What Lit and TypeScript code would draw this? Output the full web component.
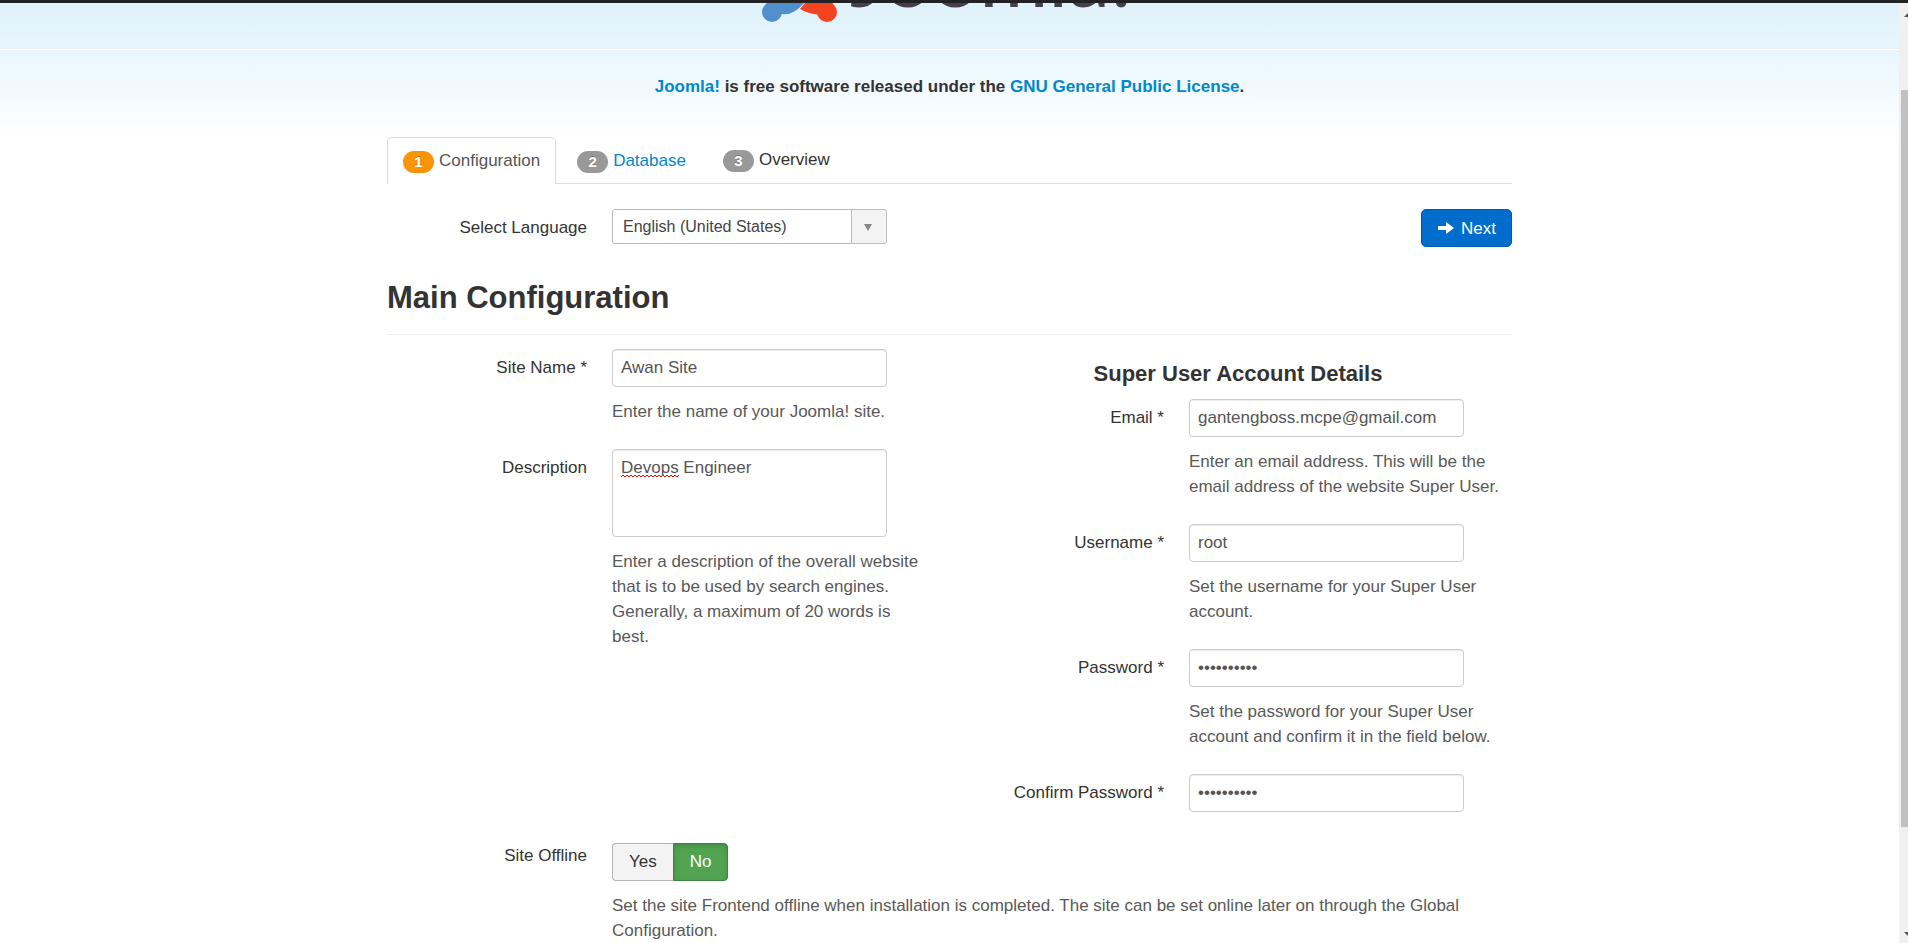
import { LitElement, html, css } from "lit";
import { customElement, property, state } from "lit/decorators.js";

@customElement("control-group")
class ControlGroup extends LitElement {
  @property() label = "";
  @property() kind = "text";
  @property() value = "";
  @property() hint = "";
  @property({ type: Boolean }) required = false;
  @state() offline = false;

  static styles = css`
    :host { display: block; }
    .group { display: grid; grid-template-columns: 200px minmax(0, 1fr); column-gap: 25px; align-items: start; }
    .label { text-align: right; padding-top: 6px; color: #333; }
    .field {
      display: block; box-sizing: border-box; width: 275px; max-width: 100%; height: 38px; margin: 0;
      padding: 5px 8px; border: 1px solid #ccc; border-radius: 4px; background: #fff;
      box-shadow: inset 0 1px 1px rgba(0, 0, 0, 0.075);
      font: inherit; color: #555; outline: none;
    }
    .area-wrap { position: relative; }
    .area { height: 88px; resize: none; overflow: hidden; }
    .squiggle { position: absolute; left: 9px; top: 25px; display: block; }
    .hint { margin: 12px 0 0; color: #595959; }
    .toggle { display: inline-flex; border: 0; margin: 6px 0 0; padding: 0; vertical-align: top; }
    .choice {
      box-sizing: border-box; height: 38px; padding: 5px 16px 7px; font: inherit; cursor: pointer;
      background: #f3f3f3; color: #333; border: 1px solid #b3b3b3;
    }
    .choice:first-child { border-radius: 4px 0 0 4px; border-right: 0; }
    .choice:last-child { border-radius: 0 4px 4px 0; }
    .choice.on {
      background: #51a351; color: #fff; border: 1px solid #3f8340;
      box-shadow: inset 0 2px 4px rgba(0, 0, 0, 0.15);
    }
  `;

  private control() {
    if (this.kind === "toggle") {
      return html`<div class="toggle" role="group" aria-labelledby="lbl">
        <button type="button" class="choice ${this.offline ? "on" : ""}" @click=${() => (this.offline = true)}>Yes</button>
        <button type="button" class="choice ${this.offline ? "" : "on"}" @click=${() => (this.offline = false)}>No</button>
      </div>`;
    }
    if (this.kind === "area") {
      return html`<div class="area-wrap">
        <textarea class="field area" id="ctl" .value=${this.value}></textarea>
        <svg class="squiggle" width="58" height="4" viewBox="0 0 58 4" aria-hidden="true">
          <path d="M0 3l2-2 2 2 2-2 2 2 2-2 2 2 2-2 2 2 2-2 2 2 2-2 2 2 2-2 2 2 2-2 2 2 2-2 2 2 2-2 2 2 2-2 2 2 2-2 2 2 2-2 2 2 2-2 2 2 2-2" fill="none" stroke="#f00" />
        </svg>
      </div>`;
    }
    return html`<input class="field" id="ctl" type=${this.kind} .value=${this.value} />`;
  }

  render() {
    const text = this.label + (this.required ? " *" : "");
    return html`<div class="group">
      ${this.kind === "toggle"
        ? html`<span class="label" id="lbl">${text}</span>`
        : html`<label class="label" for="ctl">${text}</label>`}
      <div>
        ${this.control()}
        ${this.hint ? html`<p class="hint">${this.hint}</p>` : ""}
      </div>
    </div>`;
  }
}

@customElement("app-root")
class AppRoot extends LitElement {
  static styles = css`
    :host {
      display: flex; height: 100vh; overflow: hidden; background: #fff; color: #333;
      font: 17px/25px "Liberation Sans", Arial, sans-serif;
    }
    a { color: #08c; text-decoration: none; }
    .page {
      flex: 1; min-width: 0; overflow: hidden; border-top: 3px solid #222;
      background: linear-gradient(#dff1fb, #eef8ff 70px, #fff 134px);
    }
    .header {
      height: 45px; overflow: hidden; display: flex; justify-content: center;
      border-bottom: 1px solid #eee; box-shadow: 0 1px #fff;
    }
    .logo { display: block; width: 375px; height: 45px; }
    .wordmark { font: 400 84px "Lato", sans-serif; fill: #443f49; }
    .container { box-sizing: border-box; width: 1125px; max-width: 100%; margin: 0 auto; }
    .license { margin: 25px 0 38px; text-align: center; font-weight: bold; font-size: 17px; line-height: 25px; }
    .tabs { display: flex; gap: 5px; margin: 0 0 25px; padding: 0; list-style: none; border-bottom: 1px solid #ddd; }
    .tab { display: flex; gap: 5px; padding: 10px 15px; border: 1px solid transparent; border-bottom: 0; }
    .tab.active { color: #555; background: #fff; border-color: #ddd; border-radius: 5px 5px 0 0; margin-bottom: -1px; padding-bottom: 11px; }
    .tab.plain { border-top: 0; }
    .badge {
      align-self: center; box-sizing: border-box; width: 31px; height: 22px; border-radius: 11px;
      background: #999; color: #fff; font-size: 15px; line-height: 21px; font-weight: bold; text-align: center;
      text-shadow: 0 -1px 0 rgba(0, 0, 0, 0.25); margin-top: 2px;
    }
    .badge.current { background: #f89406; }
    .toolbar { display: grid; grid-template-columns: 200px 1fr auto; column-gap: 25px; align-items: start; }
    .toolbar-label { text-align: right; padding-top: 6px; }
    .select {
      appearance: none; box-sizing: border-box; width: 275px; height: 35px; padding: 0 45px 0 10px;
      font: 16px "Liberation Sans", Arial, sans-serif; color: #444; border: 1px solid #bbb; border-radius: 3px;
      background:
        url("data:image/svg+xml,%3Csvg xmlns='http://www.w3.org/2000/svg' width='35' height='33'%3E%3Cpath d='M0 0h35v33H0z' fill='%23f3f3f3'/%3E%3Cpath d='M0 0h1v33H0z' fill='%23bbb'/%3E%3Cpath d='M13 14h8l-4 7z' fill='%23888'/%3E%3C/svg%3E") right top no-repeat, #fff;
    }
    .next {
      display: flex; align-items: center; gap: 7px; box-sizing: border-box; height: 38px; padding: 0 15px 0 16px;
      font: inherit; color: #fff; background: #006dcc; border: 1px solid #0059a8; border-radius: 5px; cursor: pointer;
    }
    .title { margin: 26px 0 0; padding-bottom: 11px; font-size: 31px; line-height: 50px; font-weight: bold; border-bottom: 1px solid #eee; }
    .columns { display: grid; grid-template-columns: 540px minmax(0, 1fr); column-gap: 37px; padding-top: 14px; }
    .fields { display: flex; flex-direction: column; gap: 25px; }
    .account-title { margin: 12px 0 -12px; text-align: center; font-size: 22px; line-height: 25px; font-weight: bold; }
    .offline { display: block; margin-top: 25px; }
    .scroll {
      flex: none; width: 9px; overflow: hidden; background: #f0f0f0; display: flex; flex-direction: column;
      border-top: 3px solid #222; box-sizing: border-box;
    }
    .arrow { flex: none; display: block; }
    .track { flex: 1; padding: 67px 0 96px 2px; display: flex; }
    .thumb { flex: 1; background: #c1c1c1; }
  `;

  render() {
    return html`
      <div class="page">
        <header class="header">
          <svg class="logo" viewBox="0 3 375 45" role="img" aria-label="Joomla!">
            <g fill="#5091cd"><circle cx="10" cy="12" r="10" /><path d="M4 3h38q-11 13-22 11z" /></g>
            <g fill="#f44321"><circle cx="65" cy="12" r="10" /><path d="M43 3h28l-10 11q-11 2-23-5z" /></g>
            <text class="wordmark" x="88" y="7">Joomla!</text>
          </svg>
        </header>
        <div class="container">
          <h5 class="license"><a href="#">Joomla!</a> is free software released under the <a href="#">GNU General Public License</a>.</h5>
          <ul class="tabs">
            <li class="tab active"><span class="badge current">1</span>Configuration</li>
            <li><a class="tab" href="#"><span class="badge">2</span>Database</a></li>
            <li class="tab plain"><span class="badge">3</span>Overview</li>
          </ul>
          <div class="toolbar">
            <label class="toolbar-label" for="language">Select Language</label>
            <div><select class="select" id="language"><option>English (United States)</option></select></div>
            <button class="next" type="button">
              <svg width="16" height="12" viewBox="0 0 16 12" fill="#fff"><path d="M0 4h8V0l8 6-8 6V8H0z" /></svg>Next
            </button>
          </div>
          <h3 class="title">Main Configuration</h3>
          <div class="columns">
            <div class="fields">
              <control-group label="Site Name" required value="Awan Site" hint="Enter the name of your Joomla! site."></control-group>
              <control-group label="Description" kind="area" value="Devops Engineer" hint="Enter a description of the overall website that is to be used by search engines. Generally, a maximum of 20 words is best."></control-group>
            </div>
            <div class="fields">
              <h4 class="account-title">Super User Account Details</h4>
              <control-group label="Email" required kind="email" value="gantengboss.mcpe@gmail.com" hint="Enter an email address. This will be the email address of the website Super User."></control-group>
              <control-group label="Username" required value="root" hint="Set the username for your Super User account."></control-group>
              <control-group label="Password" required kind="password" value="joomlapass" hint="Set the password for your Super User account and confirm it in the field below."></control-group>
              <control-group label="Confirm Password" required kind="password" value="joomlapass"></control-group>
            </div>
          </div>
          <control-group class="offline" label="Site Offline" kind="toggle" hint="Set the site Frontend offline when installation is completed. The site can be set online later on through the Global Configuration."></control-group>
        </div>
      </div>
      <div class="scroll" aria-hidden="true">
        <svg class="arrow" width="9" height="20" viewBox="0 0 9 20"><path d="M5 14l4-4v4z" fill="#505050" /></svg>
        <div class="track"><div class="thumb"></div></div>
        <svg class="arrow" width="9" height="20" viewBox="0 0 9 20"><path d="M5 9h4v4z" fill="#505050" /></svg>
      </div>
    `;
  }
}
